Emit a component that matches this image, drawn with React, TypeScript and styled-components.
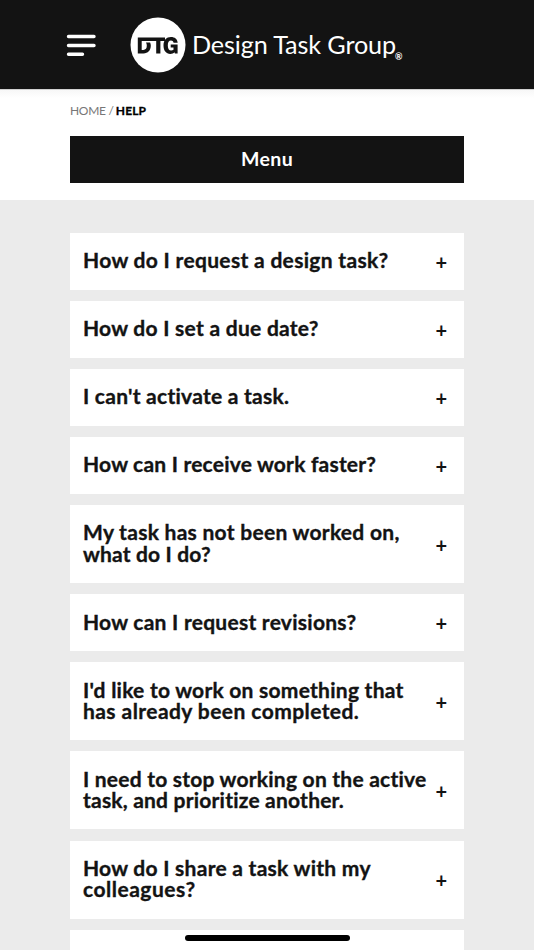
import React from "react";
import styled, { createGlobalStyle } from "styled-components";

const GlobalStyle = createGlobalStyle`
  * { box-sizing: border-box; }
  html, body { margin: 0; height: 950px; overflow: hidden; background: #ebebeb; }
  body { font-family: Lato, "Open Sans", sans-serif; color: #131313; }
`;

const Page = styled.div`
  display: flex;
  flex-direction: column;
  height: 950px;
  overflow: hidden;
`;

const Header = styled.header`
  display: flex;
  align-items: center;
  flex: none;
  height: 89px;
  padding: 0 66px;
  background: #131313;
`;

const MenuButton = styled.button`
  display: flex;
  width: 30px;
  margin-right: 34px;
  padding: 0;
  border: 0;
  background: none;
`;

const Brand = styled.a`
  display: flex;
  align-items: center;
  color: #fff;
`;

const BrandName = styled.span`
  margin: -2px 0 0 6px;
  font-size: 25.2px;
  line-height: 30px;
  letter-spacing: -0.12px;
  white-space: nowrap;
`;

const Registered = styled.sup`
  align-self: flex-end;
  margin: 0 0 9px -1px;
  font-size: 9px;
  font-weight: 700;
  line-height: 14px;
`;

const Intro = styled.section`
  flex: none;
  height: 111px;
  padding: 14px 69.8px 0 70px;
  border-top: 1px solid #d2d2d2;
  background: linear-gradient(#f7f7f7, #fff 8px);
`;

const Breadcrumb = styled.nav`
  height: 32px;
  font-size: 12px;
  line-height: 14px;
  letter-spacing: -0.3px;
  color: #777;
`;

const Current = styled.b`
  margin-left: -0.5px;
  letter-spacing: 0.1px;
  color: #000;
  -webkit-text-stroke: 0.3px;
`;

const SectionMenu = styled.button`
  display: block;
  width: 100%;
  height: 47px;
  padding: 0 0 1px;
  border: 0;
  background: #131313;
  color: #fff;
  font: 700 19.5px/24px Lato, sans-serif;
  letter-spacing: 0.4px;
`;

const Questions = styled.main`
  display: flex;
  flex-direction: column;
  gap: 11.2px;
  padding: 33.2px 69.8px 0 70px;
`;

const Card = styled.article`
  display: flex;
  align-items: center;
  justify-content: space-between;
  flex: none;
  min-height: 56.8px;
  padding: 17.8px 16.5px 17.8px 13px;
  background: #fff;
`;

const Title = styled.h2`
  margin: -1.5px 0 1.5px;
  font-size: 21px;
  font-weight: 700;
  line-height: 21.2px;
  white-space: nowrap;
  -webkit-text-stroke: 0.35px;
`;

const Line = styled.span<{ $tracking: number }>`
  display: block;
  letter-spacing: ${({ $tracking }) => $tracking}px;
`;

const Plus = styled.span`
  width: 13px;
  margin: 1px 0 -1px;
  text-align: center;
  font-size: 20px;
  font-weight: 700;
  line-height: 21px;
`;

const HomeIndicator = styled.div`
  position: fixed;
  left: 185px;
  bottom: 9px;
  width: 165px;
  height: 6px;
  border-radius: 3px;
  background: #000;
`;

type TextLine = [text: string, tracking: number];

const questions: TextLine[][] = [
  [["How do I request a design task?", 0.32]],
  [["How do I set a due date?", 0.27]],
  [["I can't activate a task.", 0.26]],
  [["How can I receive work faster?", 0.21]],
  [["My task has not been worked on,", 0.28], ["what do I do?", 0.17]],
  [["How can I request revisions?", 0.26]],
  [["I'd like to work on something that", 0.25], ["has already been completed.", 0.43]],
  [["I need to stop working on the active", 0.23], ["task, and prioritize another.", 0.21]],
  [["How do I share a task with my", 0.27], ["colleagues?", 0.51]],
];

function Logo() {
  return (
    <svg width="56" height="56" viewBox="0 0 56 56" role="img" aria-label="DTG">
      <circle cx="28" cy="28" r="27.5" fill="#fff" />
      <g fill="#131313">
        <path d="M7.8 20.5H35v3.6h-4.6v12.4h-4.2V24.1H11.7v8.9h1.6c2.5 0 3.5-1.5 3.5-4.4 0-1.3-.2-2.4-.8-3.2h4.1c.4 1 .7 2 .7 3.2 0 5-2.9 7.9-7.3 7.9H7.8z" />
        <path d="M43.6 25.8c-.4-1.5-1.2-2.3-2.6-2.3-2.2 0-3.2 1.8-3.2 4.9s1.1 5 3.3 5c1 0 1.8-.2 2.4-.6v-2.2h-2.8v-3.2h6.9v9.1h-2.7l-.4-1.3c-1 1.1-2.4 1.7-4.2 1.7-4.2 0-6.8-3.3-6.8-8.4 0-5.2 2.9-8.5 7.5-8.5 3.8 0 6.3 2.1 6.7 5.8z" />
      </g>
    </svg>
  );
}

export default function App() {
  return (
    <Page>
      <GlobalStyle />
      <Header>
        <MenuButton aria-label="Open navigation">
          <svg width="30" height="24" viewBox="0 0 30 24" stroke="#fff" strokeWidth="3.4" strokeLinecap="round">
            <path d="M2.5 3.5h25.5M2.5 12.5h25.5M2.5 21.3h14" />
          </svg>
        </MenuButton>
        <Brand>
          <Logo />
          <BrandName>Design Task Group</BrandName>
          <Registered>®</Registered>
        </Brand>
      </Header>
      <Intro>
        <Breadcrumb>HOME / <Current>HELP</Current></Breadcrumb>
        <SectionMenu>Menu</SectionMenu>
      </Intro>
      <Questions>
        {questions.map((lines) => (
          <Card key={lines[0][0]}>
            <Title>
              {lines.map(([text, tracking]) => (
                <Line key={text} $tracking={tracking}>{text}</Line>
              ))}
            </Title>
            <Plus>+</Plus>
          </Card>
        ))}
        <Card />
      </Questions>
      <HomeIndicator />
    </Page>
  );
}
